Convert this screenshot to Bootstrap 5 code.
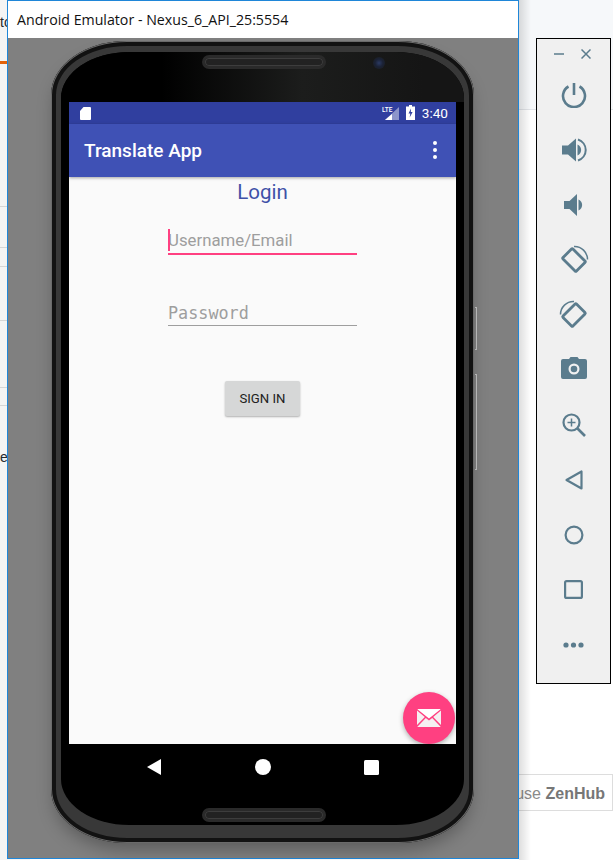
<!DOCTYPE html>
<html lang="en">
<head>
    <meta charset="UTF-8">
    <meta name="viewport" content="width=device-width, initial-scale=1.0">
    <title>Android Emulator</title>
    <link href="https://cdn.jsdelivr.net/npm/bootstrap@5.3.0/dist/css/bootstrap.min.css" rel="stylesheet">
    <style>
        html, body { margin: 0; background: #fff; overflow: hidden; }
        .desktop { position: relative; width: 613px; height: 860px; overflow: hidden; background: #fff; font-family: "Liberation Sans", sans-serif; }

        /* what shows behind the windows */
        .back-left { position: absolute; left: 0; top: 0; width: 30px; height: 860px; background: #f4f4f4; }
        .back-line { position: absolute; left: 0; right: 0; height: 1px; background: #d6d6d6; }
        .back-orange { position: absolute; left: 0; top: 61px; width: 30px; height: 3px; background: #e36209; }
        .back-text { position: absolute; left: 0; font-family: "Liberation Sans", sans-serif; font-size: 14px; line-height: 20px; color: #24292e; white-space: nowrap; }
        .back-right { position: absolute; left: 500px; right: 0; top: 0; height: 110px; background: #f6f8fa; border-bottom: 1px solid #e1e4e8; }
        .zen-strip { position: absolute; left: 480px; right: 0; top: 774px; height: 37px; padding-right: 7px; border-top: 1px solid #ddd; border-bottom: 1px solid #ddd; border-right: 1px solid #ddd; font-size: 16px; line-height: 37px; color: #8a8a8a; white-space: nowrap; text-align: right; }
        .zen-strip b { color: #777; }
        .win-shadow { position: absolute; left: 519px; top: 0; width: 12px; height: 860px; background: linear-gradient(90deg, rgba(0,0,0,.13), rgba(0,0,0,0)); }

        /* emulator window */
        .emu-win { position: absolute; left: 7px; top: 0; width: 512px; height: 859px; border: 1px solid #1f86d8; background: #808080; }
        .emu-title { height: 37px; background: #fff; padding-left: 9px; font-family: "Open Sans", sans-serif; font-size: 14.2px; line-height: 38px; color: #111; white-space: nowrap; }
        .emu-stage { height: 820px; padding: 3px 0 0 43px; background: #808080; }

        .phone { position: relative; width: 423px; height: 802px; padding: 11px 10px 11px; border-radius: 76px / 54px; background: #383838; box-shadow: inset 0 0 0 1px #6a6a6a, inset 0 0 0 5px #121212, 0 10px 18px -4px rgba(0,0,0,.3); }
        .bezel { position: relative; height: 773px; padding: 50px 8px 0; border-radius: 68px / 46px; background: #000; }
        .bezel-top { position: absolute; left: 0; right: 0; top: 0; height: 50px; border-radius: 68px 68px 0 0 / 46px 46px 0 0; background: linear-gradient(90deg, #000 25%, #1c1d1c 60%, #151515 90%); }
        .speaker { position: absolute; left: 141px; width: 124px; height: 14px; border-radius: 7px; background: #222; border: 3px solid #2a2a2a; box-shadow: inset 0 0 0 1px #3d3d3d; }
        .speaker-top { top: 3px; }
        .speaker-bot { top: 756px; }
        .camera { position: absolute; left: 312px; top: 5px; width: 12px; height: 12px; border-radius: 50%; background: radial-gradient(circle, #2b3a63 0, #1b2236 45%, #1a1c1c 100%); }
        .side-key { position: absolute; left: 424px; width: 2px; border: 1px solid #b5b5b5; border-left: 0; }

        .phone-screen { position: relative; width: 387px; height: 642px; background: #fafafa; display: flex; flex-direction: column; }
        .status-row { height: 22px; background: #303f9f; color: #fff; padding: 0 8px 0 11px; font-family: Roboto, sans-serif; font-size: 13.6px; }
        .status-right { gap: 7px; }
        .app-row { height: 53px; background: #3f51b5; box-shadow: 0 1px 3px rgba(0,0,0,.35); padding: 0 18px 2px 15px; position: relative; }
        .app-name { color: #fff; font-family: Roboto, sans-serif; font-weight: 500; font-size: 19px; padding-top: 4px; }
        .login-box { width: 189px; margin-left: 99px; }
        .login-head { font-family: Roboto, sans-serif; font-size: 20.5px; line-height: 30px; color: #3f51a8; text-align: center; margin: 0; font-weight: 400; }
        .login-input { height: 29px; padding: 0; border: 0; border-radius: 0; background: transparent; font-size: 16.8px; box-shadow: none; }
        .login-input::placeholder { color: #9e9e9e; opacity: 1; }
        .user-input { font-family: Roboto, sans-serif; border-bottom: 2px solid #ff4081; margin-top: 19px; }
        .pass-input { font-family: "DejaVu Sans Mono", monospace; border-bottom: 1px solid #9e9e9e; margin-top: 41px; height: 30px; padding-top: 4px; }
        .caret-mark { position: absolute; left: 99px; top: 127px; width: 2px; height: 22px; background: #ff4081; }
        .sign-btn { width: 75px; height: 35px; margin: 55px auto 0; display: block; padding: 0; background: #d6d7d7; border: 0; border-radius: 2px; color: #212121; font-family: Roboto, sans-serif; font-weight: 400; font-size: 13.2px; box-shadow: 0 1px 2px rgba(0,0,0,.3); }
        .mail-fab { position: absolute; right: 1px; bottom: 0; width: 52px; height: 52px; border-radius: 50%; background: #ff4081; box-shadow: 0 2px 5px rgba(0,0,0,.3); }
        .soft-keys { width: 387px; height: 46px; background: #000; padding: 0 77px 0 78px; }

        /* emulator side toolbar */
        .tool-win { position: absolute; left: 536px; top: 38px; width: 75px; height: 646px; border: 1px solid #000; background: #f0f0f0; padding-top: 5px; }
        .tool-head { height: 20px; padding: 0 19px 0 17px; }
        .tool-item { height: 55px; }
        .tool-item svg { display: block; }
        .tool-list { margin-top: 3px; }
    </style>
</head>
<body>
    <div class="desktop">
        <div class="back-left">
            <span class="back-text" style="top: 12px">to</span>
            <div class="back-orange"></div>
            <div class="back-line" style="top: 206px"></div>
            <div class="back-line" style="top: 247px"></div>
            <div class="back-line" style="top: 266px"></div>
            <div class="back-line" style="top: 320px"></div>
            <div class="back-line" style="top: 387px"></div>
            <div class="back-line" style="top: 405px"></div>
            <span class="back-text" style="top: 447px">e</span>
        </div>
        <div class="back-right"></div>
        <div class="zen-strip">use <b>ZenHub</b></div>
        <div class="win-shadow"></div>

        <div class="emu-win">
            <div class="emu-title">Android Emulator - Nexus_6_API_25:5554</div>
            <div class="emu-stage">
                <div class="phone">
                    <div class="side-key" style="top: 266px; height: 43px"></div>
                    <div class="side-key" style="top: 333px; height: 96px"></div>
                    <div class="bezel">
                        <div class="bezel-top"></div>
                        <div class="speaker speaker-top"></div>
                        <div class="speaker speaker-bot"></div>
                        <div class="camera"></div>
                        <div class="phone-screen">
                            <div class="status-row d-flex align-items-center justify-content-between">
                                <svg width="11" height="13" viewBox="0 0 11 13"><path fill="#fff" d="M3.5 0H10a1 1 0 0 1 1 1v11a1 1 0 0 1-1 1H1a1 1 0 0 1-1-1V4z"/></svg>
                                <div class="status-right d-flex align-items-center">
                                    <svg width="17" height="14" viewBox="0 0 17 14"><path fill="#fff" fill-opacity=".45" d="M17 1v13H3z"/><path fill="#fff" d="M10 8v6H3z"/><text x="0" y="6" fill="#fff" font-family="Roboto, sans-serif" font-size="6.5" font-weight="500">LTE</text></svg>
                                    <svg width="9" height="15" viewBox="0 0 9 15"><path fill="#fff" d="M3 0h3v1.500h3V15H0V1.500h3z"/><path fill="#303f9f" d="M5 3.500 2.500 8.500H4.300l-.6 4L6.600 7H4.800z"/></svg>
                                    <span>3:40</span>
                                </div>
                            </div>
                            <div class="app-row navbar flex-nowrap">
                                <span class="app-name">Translate App</span>
                                <svg width="6" height="18" viewBox="0 0 6 18"><circle cx="3" cy="2" r="2" fill="#fff"/><circle cx="3" cy="9" r="2" fill="#fff"/><circle cx="3" cy="16" r="2" fill="#fff"/></svg>
                            </div>
                            <form class="login-box">
                                <h1 class="login-head">Login</h1>
                                <input class="form-control login-input user-input" type="text" placeholder="Username/Email">
                                <input class="form-control login-input pass-input" type="password" placeholder="Password">
                                <button class="btn sign-btn" type="button">SIGN IN</button>
                            </form>
                            <div class="caret-mark"></div>
                            <div class="mail-fab d-flex align-items-center justify-content-center">
                                <svg width="24" height="18" viewBox="0 0 24 18"><path fill="#fff" d="M1 0h22a1 1 0 0 1 .6.2L12 9.500.4.200A1 1 0 0 1 1 0z"/><path fill="#f5f0f2" d="M0 1.500 7.800 8 0 16zM24 1.500 16.200 8 24 16zM8.800 8.900 12 11.500l3.200-2.600L23.600 17.700a1 1 0 0 1-.6.300H1a1 1 0 0 1-.6-.3z"/></svg>
                            </div>
                        </div>
                        <div class="soft-keys d-flex align-items-center justify-content-between">
                            <svg width="14" height="16" viewBox="0 0 14 16"><path fill="#fff" d="M14 0v16L0 8z"/></svg>
                            <svg width="16" height="16" viewBox="0 0 16 16"><circle cx="8" cy="8" r="8" fill="#fff"/></svg>
                            <svg width="15" height="15" viewBox="0 0 15 15"><rect width="15" height="15" rx="1.500" fill="#fff"/></svg>
                        </div>
                    </div>
                </div>
            </div>
        </div>

        <div class="tool-win">
            <div class="tool-head d-flex align-items-center justify-content-between">
                <svg width="10" height="10" viewBox="0 0 10 10"><path stroke="#5b7c8d" stroke-width="1.500" d="M0 5h10"/></svg>
                <svg width="10" height="10" viewBox="0 0 10 10"><path stroke="#5b7c8d" stroke-width="1.500" d="M.5.500l9 9M9.500.500l-9 9"/></svg>
            </div>
            <div class="tool-list">
                <div class="tool-item d-flex align-items-center justify-content-center">
                    <svg width="26" height="26" viewBox="0 0 26 26" fill="none" stroke="#5b7c8d" stroke-width="2.600"><path d="M13 1v12"/><path d="M7.500 4.500a11 11 0 1 0 11 0"/></svg>
                </div>
                <div class="tool-item d-flex align-items-center justify-content-center">
                    <svg width="26" height="26" viewBox="0 0 26 26"><path fill="#5b7c8d" d="M1 8.500h6L15 1.500v23l-8-7H1z"/><path fill="#5b7c8d" d="M16.500 7.500a6 6 0 0 1 0 11z"/><path fill="none" stroke="#5b7c8d" stroke-width="2" d="M17 2.500a11 11 0 0 1 0 21"/></svg>
                </div>
                <div class="tool-item d-flex align-items-center justify-content-center">
                    <svg width="20" height="24" viewBox="0 0 20 24"><path fill="#5b7c8d" d="M0 8h5.500L13 1v22l-7.500-7H0z"/><path fill="#5b7c8d" d="M14.500 6.500a6 6 0 0 1 0 11z"/></svg>
                </div>
                <div class="tool-item d-flex align-items-center justify-content-center">
                    <svg width="30" height="30" viewBox="0 0 30 30" fill="none" stroke="#5b7c8d"><rect x="5.500" y="8" width="19" height="14" rx="1" stroke-width="2.800" transform="rotate(45 15 15)"/><path stroke-width="1.500" d="M15 1.500a13 13 0 0 1 13.500 13"/></svg>
                </div>
                <div class="tool-item d-flex align-items-center justify-content-center">
                    <svg width="30" height="30" viewBox="0 0 30 30" fill="none" stroke="#5b7c8d"><rect x="5.500" y="8" width="19" height="14" rx="1" stroke-width="2.800" transform="rotate(-45 15 15)"/><path stroke-width="1.500" d="M15 1.500A13 13 0 0 0 1.500 14.500"/></svg>
                </div>
                <div class="tool-item d-flex align-items-center justify-content-center">
                    <svg class="mb-1" width="26" height="22" viewBox="0 0 26 22"><path fill="#5b7c8d" fill-rule="evenodd" d="M2 2h6L9.500 0h7L18 2h6a2 2 0 0 1 2 2v16a2 2 0 0 1-2 2H2a2 2 0 0 1-2-2V4a2 2 0 0 1 2-2zM13 6.500a5.500 5.500 0 1 0 0 11 5.500 5.500 0 0 0 0-11z"/><circle cx="13" cy="12" r="3.300" fill="#5b7c8d"/></svg>
                </div>
                <div class="tool-item d-flex align-items-center justify-content-center">
                    <svg width="24" height="24" viewBox="0 0 24 24" fill="none" stroke="#5b7c8d"><circle cx="9.500" cy="9.500" r="8" stroke-width="2.200"/><path stroke-width="2.600" d="M15.500 15.500 23 23"/><path stroke-width="1.500" d="M9.500 5.500v8M5.500 9.500h8"/></svg>
                </div>
                <div class="tool-item d-flex align-items-center justify-content-center">
                    <svg width="18" height="20" viewBox="0 0 18 20" fill="none" stroke="#5b7c8d" stroke-width="2.200" stroke-linejoin="round"><path d="M16.500 1.500v17L1.500 10z"/></svg>
                </div>
                <div class="tool-item d-flex align-items-center justify-content-center">
                    <svg width="20" height="20" viewBox="0 0 20 20" fill="none" stroke="#5b7c8d" stroke-width="2.200"><circle cx="10" cy="10" r="8.400"/></svg>
                </div>
                <div class="tool-item d-flex align-items-center justify-content-center">
                    <svg width="19" height="19" viewBox="0 0 19 19" fill="none" stroke="#5b7c8d" stroke-width="2.200"><rect x="1.100" y="1.100" width="16.800" height="16.800" rx="1.500"/></svg>
                </div>
                <div class="tool-item d-flex align-items-center justify-content-center">
                    <svg width="21" height="6" viewBox="0 0 21 6"><circle cx="3" cy="3" r="2.600" fill="#5b7c8d"/><circle cx="10.500" cy="3" r="2.600" fill="#5b7c8d"/><circle cx="18" cy="3" r="2.600" fill="#5b7c8d"/></svg>
                </div>
            </div>
        </div>
    </div>
    <script src="https://cdn.jsdelivr.net/npm/bootstrap@5.3.0/dist/js/bootstrap.bundle.min.js"></script>
</body>
</html>
